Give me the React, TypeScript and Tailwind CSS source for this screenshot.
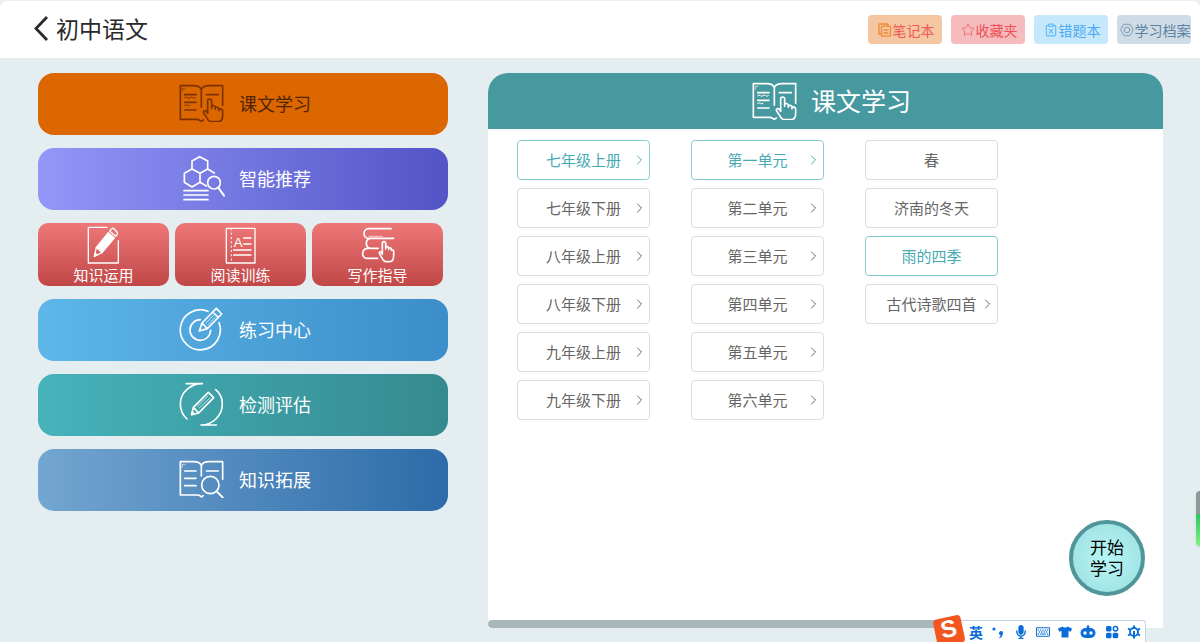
import { useState, ReactNode } from 'react';
import clsx from 'clsx';
import { ClipboardX, Star } from 'lucide-react';
import { FaMicrophone, FaRegKeyboard, FaTshirt } from 'react-icons/fa';

const strokeProps = {
  fill: 'none',
  stroke: 'currentColor',
  strokeWidth: 5,
  strokeLinecap: 'round' as const,
  strokeLinejoin: 'round' as const,
  'aria-hidden': true,
};

function BackIcon() {
  return (
    <svg className="w-4 h-[27px]" viewBox="0 0 16 27" {...strokeProps} strokeWidth={2.8} strokeLinecap="butt" strokeLinejoin="miter">
      <path d="M14 2L3 13.5L14 25" />
    </svg>
  );
}

function BookPages() {
  return (
    <>
      <path d="M67 16C62 7 54 5 44 5H4V106H54C60 106 62 108 67 112L73 108" />
      <path d="M67 16C72 7 80 5 90 5H131V64M67 16V70" />
      <path d="M10 22V13H18" strokeWidth={2} />
    </>
  );
}

function BookHandIcon() {
  return (
    <svg className="w-[45px] h-[38px]" viewBox="0 0 135 114" {...strokeProps}>
      <BookPages />
      <path d="M17 32H51M17 55H51M17 78H51M82 32H118" />
      <path d="M17 41q4-4 8 0t8 0t8 0t8 0M17 64q4-4 8 0t8 0" strokeWidth={3} />
      <path d="M86 88V51a6 6 0 0 1 12 0v22v-6c1-4 10-3 11 2v7v-4c1-4 10-2 11 2v6v-3c2-4 11-2 11 4v12c0 12-5 20-14 20H96c-6 0-8-4-11-9l-11-17c-3-6 3-9 7-6l5 7" />
    </svg>
  );
}

function BookSearchIcon() {
  return (
    <svg className="w-[45px] h-[38px]" viewBox="0 0 135 114" {...strokeProps}>
      <path d="M67 16C62 7 54 5 44 5H4V105H56C62 105 63 108 68 111L72 107" />
      <path d="M67 16C72 7 80 5 90 5H131V58M67 16V48" />
      <path d="M10 22V13H18" strokeWidth={2} />
      <path d="M17 33H51M17 55H51M17 77H51M82 33H118" />
      <circle cx="94" cy="75" r="26" />
      <path d="M113 94L131 112" strokeWidth={6} />
    </svg>
  );
}

function HexSearchIcon() {
  return (
    <svg className="w-[46px] h-[46px]" viewBox="-12 0 138 138" {...strokeProps}>
      <path d="M50 5L74 18V42L51 55L27 42V18ZM27 42L4 55V82L27 96L51 82V55M74 42L94 54M51 82L70 93" />
      <circle cx="93" cy="83" r="19" />
      <path d="M106 98L123 122" strokeWidth={6} />
      <path d="M3 107H75M3 120H75M3 134H75" />
    </svg>
  );
}

function PencilBoxIcon() {
  return (
    <svg className="w-[33px] h-[38px]" viewBox="0 0 99 114" {...strokeProps} strokeWidth={4}>
      <path d="M60 4H4V111H94V44" />
      <path d="M64 20L82 36L45 80L28 64Z" fill="currentColor" />
      <path d="M68 15L74 8Q78 5 82 9L90 18Q93 22 90 26L86 31ZM28 64L22 91L45 80" />
      <path d="M22 91L24 82L31 87Z" fill="currentColor" />
    </svg>
  );
}

function ReadingIcon() {
  return (
    <svg className="w-[31px] h-[37px]" viewBox="0 0 93 111" {...strokeProps} strokeWidth={3}>
      <rect x="4" y="4" width="86" height="104" strokeWidth={4} />
      <path d="M19 4V108" strokeDasharray="6 7" strokeLinecap="butt" />
      <path d="M56 33H78M56 51H78M26 69H78M26 84H78" strokeWidth={4} />
      <text x="26" y="61" fontSize="40" fill="currentColor" stroke="none" fontFamily="Liberation Sans">A</text>
    </svg>
  );
}

function BooksHandIcon() {
  return (
    <svg className="w-[34px] h-[36px]" viewBox="0 0 102 108" {...strokeProps}>
      <path d="M90 5H22C5 5 5 34 22 34H98M28 34C12 36 12 62 28 64H52M22 64C0 64 0 94 18 94H50" />
      <path d="M24 28H64" strokeWidth={2} />
      <path d="M64 82V49a5 5 0 0 1 10 0v17v-5c1-4 8-2 9 1v5v-3c1-3 8-2 8 2v4c2-3 7-1 7 3v12c0 12-5 19-12 19H74c-5 0-7-5-10-9l-8-14c-3-6 2-8 5-5l3 5" />
    </svg>
  );
}

function TargetIcon() {
  return (
    <svg className="w-[44px] h-[44px]" viewBox="0 0 132 132" {...strokeProps}>
      <path d="M87 13A60 60 0 1 0 120 47" />
      <path d="M64 38A31 31 0 1 0 95 70" />
      <path d="M69 48L61 72L85 65L128 21L112 4ZM69 48L85 65M101 15L118 31" />
      <path d="M81 48L104 25M87 53L109 31" strokeWidth={2} />
    </svg>
  );
}

function AssessIcon() {
  return (
    <svg className="w-[44px] h-[44px]" viewBox="0 0 132 132" {...strokeProps}>
      <path d="M22 5H70C40 4 4 28 4 66C4 84 12 100 24 111" />
      <path d="M110 23C124 34 130 50 130 66C130 100 102 129 66 129H112" />
      <path d="M43 76L38 98L59 93L104 47L88 31ZM43 76L59 93" />
      <path d="M38 98L40 90L46 96Z" fill="currentColor" />
      <path d="M55 73L86 43M61 78L93 48" strokeWidth={2} />
    </svg>
  );
}

function NotesIcon() {
  return (
    <svg className="w-3.5 h-3.5" viewBox="0 0 14 14" {...strokeProps} strokeWidth={1.3}>
      <path d="M10 3V1H1V11H3" />
      <rect x="3.5" y="3.2" width="9" height="10" rx="1" />
      <path d="M6 7H10M6 10H10" />
    </svg>
  );
}

function ArchiveIcon() {
  return (
    <svg className="w-3.5 h-3.5" viewBox="0 0 14 14" {...strokeProps} strokeWidth={1}>
      <path d="M4 1.3H10L13.2 7L10 12.7H4L0.8 7Z" />
      <circle cx="7" cy="7" r="2.8" />
    </svg>
  );
}

function ArrowIcon() {
  return (
    <svg className="absolute right-1.5 top-1/2 -translate-y-1/2 w-[7px] h-[10px]" viewBox="0 0 7 10" {...strokeProps} strokeWidth={1}>
      <path d="M1.5 1L5.5 5L1.5 9" />
    </svg>
  );
}

interface ToolLink {
  label: string;
  icon: ReactNode;
  className: string;
}

const toolLinks: ToolLink[] = [
  { label: '笔记本', icon: <NotesIcon />, className: 'bg-[#f4c6a2] text-[#ee5a55] [&>svg]:text-[#f08a35]' },
  { label: '收藏夹', icon: <Star className="w-3.5 h-3.5" strokeWidth={1.6} />, className: 'bg-[#f6bcbd] text-[#ee5058] [&>svg]:text-[#f0686c]' },
  { label: '错题本', icon: <ClipboardX className="w-3.5 h-3.5" strokeWidth={2} />, className: 'bg-[#c6e8fb] text-[#4eaaf0] [&>svg]:text-[#62b9f8]' },
  { label: '学习档案', icon: <ArchiveIcon />, className: 'bg-[#cfdce5] text-[#5c82a3] [&>svg]:text-[#7d9dba]' },
];

interface MenuItem {
  label: string;
  icon: ReactNode;
  className: string;
}

const topMenu: MenuItem[] = [
  { label: '课文学习', icon: <BookHandIcon />, className: 'bg-[#dc6600] text-[#4f2600] [&_svg]:text-[#7d3300]' },
  { label: '智能推荐', icon: <HexSearchIcon />, className: 'bg-linear-to-r from-[#9397f8] to-[#5354c6] text-white' },
];

const skillMenu = [
  { label: '知识运用', icon: <PencilBoxIcon /> },
  { label: '阅读训练', icon: <ReadingIcon /> },
  { label: '写作指导', icon: <BooksHandIcon /> },
];

const bottomMenu: MenuItem[] = [
  { label: '练习中心', icon: <TargetIcon />, className: 'bg-linear-to-r from-[#5eb6e9] to-[#3b8ec9] text-white' },
  { label: '检测评估', icon: <AssessIcon />, className: 'bg-linear-to-r from-[#46b3bb] to-[#358a8f] text-white' },
  { label: '知识拓展', icon: <BookSearchIcon />, className: 'bg-linear-to-r from-[#73a6d0] to-[#2c6ba9] text-white' },
];

const grades = ['七年级上册', '七年级下册', '八年级上册', '八年级下册', '九年级上册', '九年级下册'];
const units = ['第一单元', '第二单元', '第三单元', '第四单元', '第五单元', '第六单元'];
const lessons = ['春', '济南的冬天', '雨的四季', '古代诗歌四首'];

function MenuCard({ item }: { item: MenuItem }) {
  return (
    <button
      type="button"
      className={clsx('h-[62px] w-full rounded-2xl pl-1 pb-0.5 flex items-center justify-center text-lg cursor-pointer', item.className)}
    >
      <span className="w-[60px] flex justify-start [&>svg]:shrink-0">{item.icon}</span>
      <span>{item.label}</span>
    </button>
  );
}

interface OptionColumnProps {
  name: string;
  options: string[];
  selected: string;
  hasArrow: (option: string) => boolean;
  onSelect: (option: string) => void;
}

function OptionColumn({ name, options, selected, hasArrow, onSelect }: OptionColumnProps) {
  return (
    <ul aria-label={name} className="flex flex-col gap-2 w-[133px]">
      {options.map(option => (
        <li key={option}>
          <button
            type="button"
            aria-pressed={option === selected}
            onClick={() => onSelect(option)}
            className={clsx(
              'relative w-full h-10 rounded border bg-white text-[15px] cursor-pointer',
              option === selected ? 'border-[#83ccd2] text-[#46aab2]' : 'border-[#dcdcdc] text-[#666]'
            )}
          >
            {option}
            {hasArrow(option) && <ArrowIcon />}
          </button>
        </li>
      ))}
    </ul>
  );
}

function InputMethodBar() {
  return (
    <div className="absolute bottom-0 right-[54px] w-[206px] h-[22px] bg-white border border-b-0 border-[#c5d3e6] rounded-t-sm flex items-center justify-between pl-7 pr-1 text-[#0a6cd8]">
      <span className="absolute -left-1.5 -top-1 w-7 h-7 rounded bg-[#f4561f] -rotate-12 flex items-start justify-center text-white text-2xl leading-6 font-bold font-['Liberation_Sans',sans-serif]">
        S
      </span>
      <span className="text-sm leading-4 font-bold">英</span>
      <svg className="w-3.5 h-3.5" viewBox="0 0 14 14" fill="currentColor" aria-hidden>
        <circle cx="3" cy="4" r="1.6" />
        <path d="M8 8a2 2 0 1 1 3.6 1.200C11.600 11 10.500 12.500 8.600 13.200L8.200 12.200C9.200 11.700 9.600 11 9.600 10.200A2 2 0 0 1 8 8Z" />
      </svg>
      <FaMicrophone className="w-3.5 h-3.5" />
      <FaRegKeyboard className="w-3.5 h-3.5" />
      <FaTshirt className="w-3.5 h-3.5" />
      <svg className="w-4 h-3.5" viewBox="0 0 16 14" aria-hidden>
        <path d="M8 1.5V4" stroke="currentColor" strokeWidth="2.5" strokeLinecap="round" />
        <rect x="0.5" y="3" width="15" height="10" rx="5" fill="currentColor" />
        <circle cx="5" cy="8" r="1.7" fill="white" />
        <circle cx="11" cy="8" r="1.7" fill="white" />
      </svg>
      <svg className="w-3.5 h-3.5" viewBox="0 0 14 14" fill="currentColor" aria-hidden>
        <rect x="1" y="1" width="5.5" height="5.5" rx="1.5" />
        <circle cx="10.5" cy="3.7" r="2.2" fill="none" stroke="currentColor" strokeWidth="1.5" />
        <rect x="1" y="7.7" width="5.5" height="5.5" rx="1.5" />
        <rect x="7.7" y="7.7" width="5.5" height="5.5" rx="1.5" />
      </svg>
      <svg className="w-3.5 h-3.5" viewBox="0 0 14 14" fill="none" stroke="currentColor" aria-hidden>
        <path d="M7 0.500V3M7 11V13.500M1 3.500L3.500 5M10.500 9L13 10.500M1 10.500L3.500 9M10.500 5L13 3.500" strokeWidth="2" />
        <circle cx="7" cy="7" r="4" strokeWidth="1.800" />
        <path d="M7 6V11" strokeWidth="2" />
      </svg>
    </div>
  );
}

export default function App() {
  const [grade, setGrade] = useState('七年级上册');
  const [unit, setUnit] = useState('第一单元');
  const [lesson, setLesson] = useState('雨的四季');

  return (
    <div className="relative min-h-screen overflow-hidden flex flex-col bg-[#e4eef1] font-normal font-['Noto_Sans_CJK_SC',sans-serif]">
      <div className="bg-[#efefef] pt-px">
        <header className="h-[57px] bg-white rounded-t-lg flex items-center justify-between pl-[33px] pr-[9px]">
          <button type="button" className="flex items-center gap-[7px] pb-[3px] text-[23px] text-[#2a2a2a] cursor-pointer">
            <BackIcon />
            <h1>初中语文</h1>
          </button>
          <nav className="flex gap-[9px]">
            {toolLinks.map(link => (
              <a
                key={link.label}
                href="#"
                className={clsx('w-[74px] h-[29px] rounded flex items-center justify-center gap-px pl-0.5 text-sm whitespace-nowrap', link.className)}
              >
                {link.icon}
                {link.label}
              </a>
            ))}
          </nav>
        </header>
      </div>

      <main className="flex-1 grid grid-cols-[410fr_675fr] gap-10 pl-[38px] pr-[37px] pt-[15px] pb-3.5">
        <nav className="flex flex-col gap-[13px]">
          {topMenu.map(item => (
            <MenuCard key={item.label} item={item} />
          ))}
          <div className="grid grid-cols-3 gap-1.5 pr-[5px]">
            {skillMenu.map(item => (
              <button
                key={item.label}
                type="button"
                className="h-[63px] rounded-[10px] pb-px bg-linear-to-b from-[#ee7778] to-[#c14747] text-white text-[15px] leading-5 flex flex-col items-center justify-end cursor-pointer"
              >
                <span className="h-10 flex items-center">{item.icon}</span>
                <span>{item.label}</span>
              </button>
            ))}
          </div>
          {bottomMenu.map(item => (
            <MenuCard key={item.label} item={item} />
          ))}
        </nav>

        <section className="relative bg-white rounded-t-[20px] flex flex-col">
          <div className="h-14 bg-[#46999e] rounded-t-[20px] text-white flex items-center justify-center gap-3.5 pl-3">
            <BookHandIcon />
            <h2 className="text-[25px] leading-9 pb-0.5">课文学习</h2>
          </div>
          <div className="flex-1 flex gap-[41px] pl-[29px] pt-[11px]">
            <OptionColumn name="年级" options={grades} selected={grade} hasArrow={() => true} onSelect={setGrade} />
            <OptionColumn name="单元" options={units} selected={unit} hasArrow={() => true} onSelect={setUnit} />
            <OptionColumn name="课文" options={lessons} selected={lesson} hasArrow={option => option === '古代诗歌四首'} onSelect={setLesson} />
          </div>
          <div className="h-2 w-[500px] rounded-full bg-[#a8b8b8]" />
          <button
            type="button"
            className="absolute right-[18px] bottom-8 w-[76px] h-[76px] pb-0.5 rounded-full border-4 border-[#4f9599] bg-radial from-[#b8f7f8] to-[#9adcde] text-black text-[17px] leading-[21px] cursor-pointer"
          >
            开始
            <br />
            学习
          </button>
        </section>
      </main>

      <div className="absolute -right-1 top-[491px] w-2 h-[55px] rounded overflow-hidden shadow flex flex-col">
        <div className="h-[23px] bg-[#8e9898]" />
        <div className="flex-1 bg-linear-to-b from-[#1fc763] to-[#7df57e]" />
      </div>

      <InputMethodBar />
    </div>
  );
}
